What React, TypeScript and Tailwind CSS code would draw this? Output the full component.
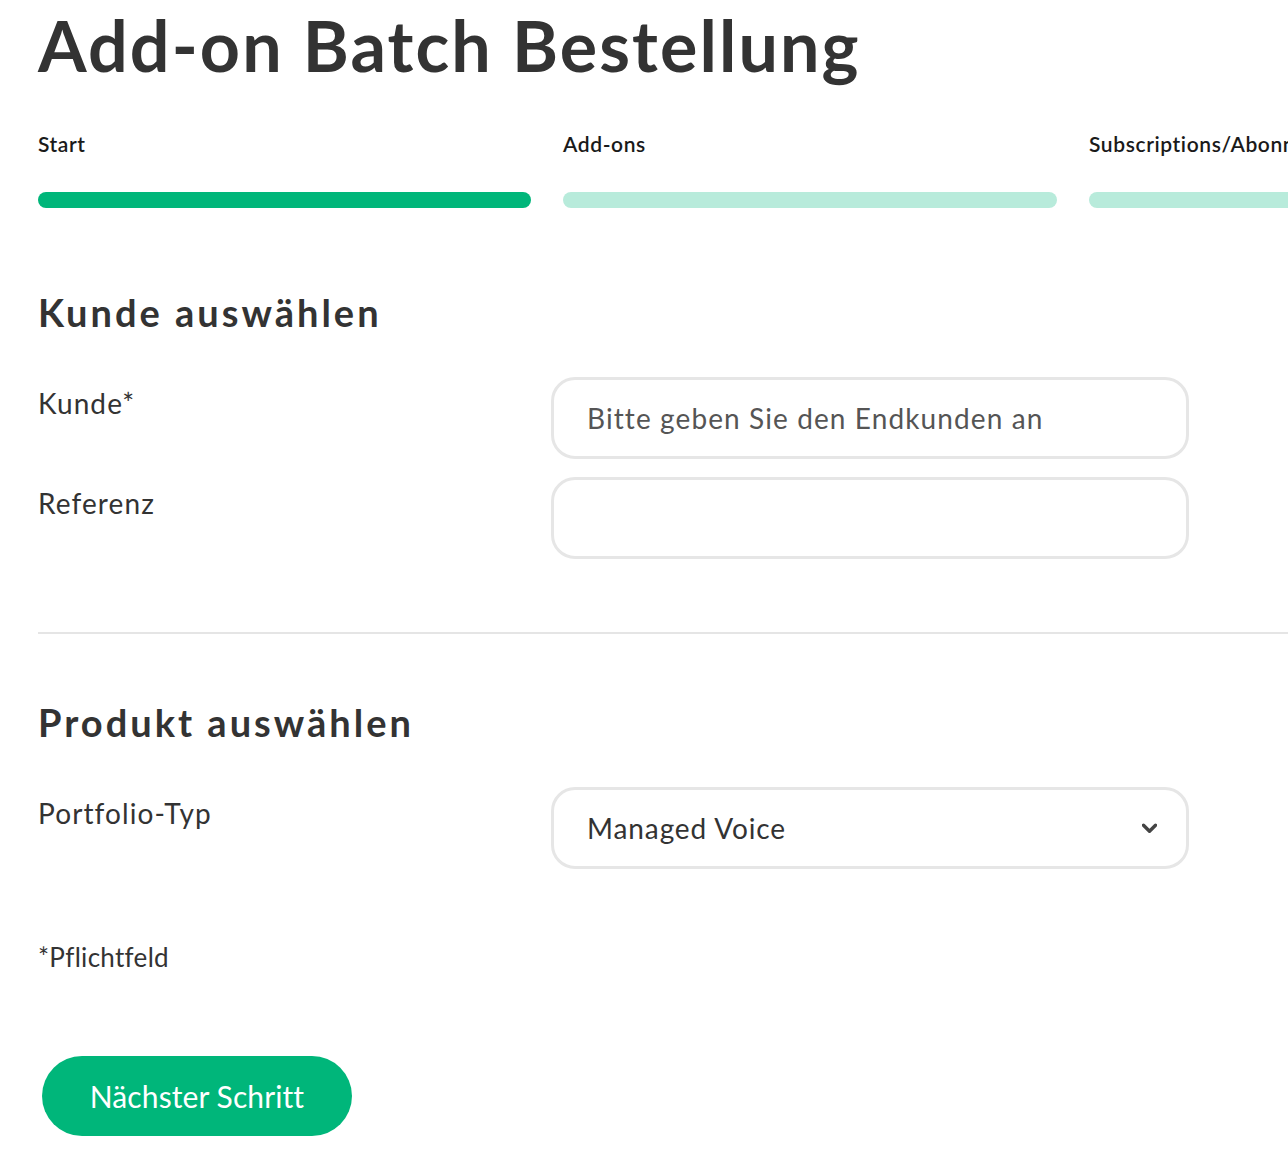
import React from 'react';

const STEPS = [
  { label: 'Start', active: true },
  { label: 'Add-ons', active: false },
  { label: 'Subscriptions/Abonnements', active: false },
];

const body = { fontFamily: 'Lato, "Noto Sans", sans-serif' };
const head = { fontFamily: 'Lato, "Open Sans", sans-serif' };

const Chevron: React.FC = () => (
  <svg width="15" height="11" viewBox="0 0 15 11" className="shrink-0">
    <path d="M1.5 2.2 L7.5 8.2 L13.5 2.2" fill="none" stroke="#444" strokeWidth="3.4" strokeLinecap="round" strokeLinejoin="round" />
  </svg>
);

const App: React.FC = () => {
  return (
    <div className="w-[1288px] h-[1158px] overflow-hidden bg-white text-[#333333]" style={body}>
      <div className="w-[1640px] pl-[38px] pt-[10px]">
        <h1 className="text-[70px] leading-[70px] font-bold tracking-[2.1px] text-[#333333]" style={head}>
          Add-on Batch Bestellung
        </h1>

        {/* Steps */}
        <div className="grid grid-cols-[493px_494px_493px] gap-x-[32px] mt-[52px]">
          {STEPS.map(step => (
            <div key={step.label}>
              <div className="text-[21px] leading-[24px] font-semibold tracking-[0.6px] text-[#1a1a1a] whitespace-nowrap">{step.label}</div>
              <div className={`h-[16px] mt-[36px] rounded-full ${step.active ? 'bg-[#00b67a]' : 'bg-[#b8ebdb]'}`} />
            </div>
          ))}
        </div>

        {/* Kunde */}
        <h2 className="mt-[81px] text-[38px] leading-[46px] font-bold tracking-[3px]" style={head}>Kunde auswählen</h2>
        <div className="mt-[42px] flex flex-col gap-[18px]">
          <div className="grid grid-cols-[513px_638px]">
            <label className="mt-[8px] text-[28px] leading-[36px] tracking-[1.1px]">Kunde*</label>
            <div className="h-[82px] border-[3px] border-[#e6e6e6] rounded-[24px] flex items-center px-[33px]">
              <span className="text-[28px] leading-[36px] tracking-[1.1px] text-[#555555] whitespace-nowrap">Bitte geben Sie den Endkunden an</span>
            </div>
          </div>
          <div className="grid grid-cols-[513px_638px]">
            <label className="mt-[8px] text-[28px] leading-[36px] tracking-[1.1px]">Referenz</label>
            <div className="h-[82px] border-[3px] border-[#e6e6e6] rounded-[24px]" />
          </div>
        </div>

        <div className="mt-[73px] h-[2px] bg-[#e5e5e5]" />

        {/* Produkt */}
        <h2 className="mt-[65px] text-[38px] leading-[46px] font-bold tracking-[3px]" style={head}>Produkt auswählen</h2>
        <div className="mt-[42px] grid grid-cols-[513px_638px]">
          <label className="mt-[8px] text-[28px] leading-[36px] tracking-[1.1px]">Portfolio-Typ</label>
          <div className="h-[82px] border-[3px] border-[#e6e6e6] rounded-[24px] flex items-center justify-between pl-[33px] pr-[29px]">
            <span className="text-[28px] leading-[36px] tracking-[0.9px] text-[#333333]">Managed Voice</span>
            <Chevron />
          </div>
        </div>

        <p className="mt-[72px] text-[26px] leading-[32px] tracking-[0.3px]">*Pflichtfeld</p>

        <button className="mt-[83px] ml-[4px] w-[310px] h-[80px] rounded-full bg-[#00b67a] text-white text-[30px] leading-[36px] tracking-[0.1px] flex items-center justify-center">
          Nächster Schritt
        </button>
      </div>
    </div>
  );
};

export default App;
